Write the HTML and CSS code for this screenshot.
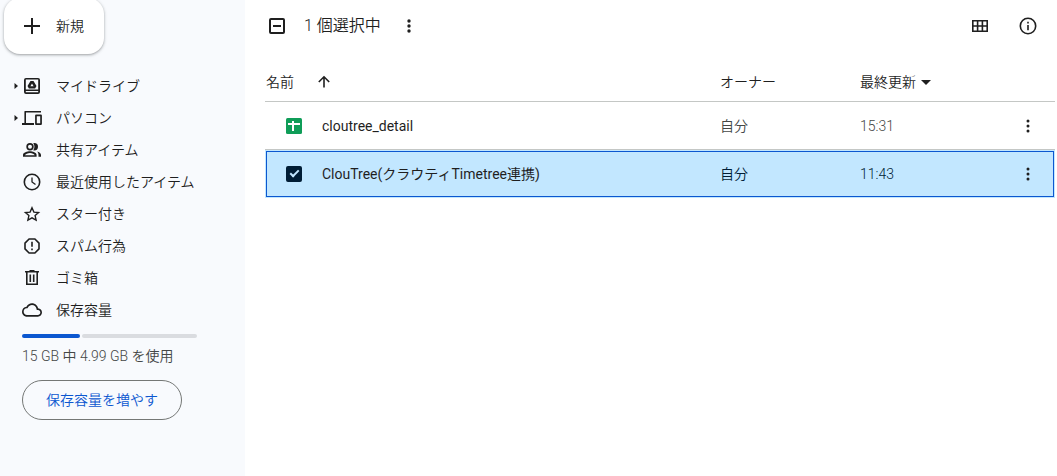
FILE: index.html
```html
<!DOCTYPE html>
<html lang="ja">

<head>
  <meta charset="UTF-8">
  <meta name="viewport" content="width=device-width, initial-scale=1.0">
  <title>マイドライブ</title>
  <link rel="stylesheet" href="styles.css">
</head>

<body>
  <div class="app">
    <aside class="sidebar">
      <button class="new-button" type="button">
        <svg class="icon-lg" viewBox="0 0 24 24"><path d="M11 4h2v7h7v2h-7v7h-2v-7H4v-2h7z"/></svg>
        <span>新規</span>
      </button>
      <nav>
        <ul class="menu">
          <li>
            <a href="#" class="menu-item">
              <svg class="caret" viewBox="0 0 12 12"><path d="M4.500 3L8 6L4.500 9z"/></svg>
              <svg class="icon" viewBox="0 0 20 20"><path fill-rule="evenodd" d="M4 2h12a2 2 0 0 1 2 2v12a2 2 0 0 1-2 2H4a2 2 0 0 1-2-2V4a2 2 0 0 1 2-2zM3.800 3.600v9.900h12.400V3.600zM3.800 15v1.300h12.400V15z"/><path fill-rule="evenodd" d="M8.500 5h3l3 5-1.400 2.500H6.900L5.500 10zM10 7.500l-1.600 2.800h3.200z"/></svg>
              <span>マイドライブ</span>
            </a>
          </li>
          <li>
            <a href="#" class="menu-item">
              <svg class="caret" viewBox="0 0 12 12"><path d="M4.500 3L8 6L4.500 9z"/></svg>
              <svg class="icon" viewBox="0 0 20 20"><path d="M3 3h16v1.600H4v10.400h8V17H0v-2h2.400V3.600c0-.4.200-.6.600-.6z"/><path fill-rule="evenodd" d="M14 6.500h5c.5 0 .9.400.9.900v8.700c0 .5-.4.900-.9.900h-5c-.5 0-.9-.4-.9-.9V7.400c0-.5.4-.9.900-.9zM14.800 8.200v7.100h3.400V8.200z"/></svg>
              <span>パソコン</span>
            </a>
          </li>
          <li>
            <a href="#" class="menu-item">
              <span class="caret"></span>
              <svg class="icon" viewBox="0 0 20 20"><path fill-rule="evenodd" d="M8 3a3.700 3.700 0 1 1 0 7.400A3.700 3.700 0 0 1 8 3zm0 1.700a2 2 0 1 0 0 4 2 2 0 0 0 0-4zM8 11.300c2.600 0 6.600 1.100 6.600 3.700v1.800H1V15c0-2.600 4.300-3.700 7-3.700zM2.900 15.200h9.900c-.3-.9-2.800-2.200-4.800-2.200s-4.800 1.300-5.100 2.200z"/><path d="M12.300 10.400a3.700 3.700 0 0 0 0-7.400c-.4 0-.7.100-1 .2 1.500 2 1.500 5 0 7 .3.100.6.200 1 .2zM15.100 11.600c.9.900 1.400 2 1.400 3.400v1.800H19V15c0-1.900-1.900-2.900-3.900-3.400z"/></svg>
              <span>共有アイテム</span>
            </a>
          </li>
          <li>
            <a href="#" class="menu-item">
              <span class="caret"></span>
              <svg class="icon stroked" viewBox="0 0 20 20"><circle cx="10" cy="10" r="7.700"/><path d="M10 5.500V10l3.500 2.600" stroke-width="1.300"/></svg>
              <span>最近使用したアイテム</span>
            </a>
          </li>
          <li>
            <a href="#" class="menu-item">
              <span class="caret"></span>
              <svg class="icon stroked star" viewBox="0 0 20 20"><path d="M10 3.800l1.900 4.300 4.700.4-3.500 3.100 1 4.600L10 13.800l-4.100 2.400 1-4.600-3.500-3.100 4.700-.4z"/></svg>
              <span>スター付き</span>
            </a>
          </li>
          <li>
            <a href="#" class="menu-item">
              <span class="caret"></span>
              <svg class="icon stroked" viewBox="0 0 20 20"><path d="M7.100 3h5.800L17 7.100v5.800L12.900 17H7.100L3 12.900V7.100z"/><path d="M10 5.800v5M10 12.400v1.800"/></svg>
              <span>スパム行為</span>
            </a>
          </li>
          <li>
            <a href="#" class="menu-item">
              <span class="caret"></span>
              <svg class="icon stroked" viewBox="0 0 20 20"><path d="M3 3.800h14M7.500 2.800h5M4.800 4v12.200h10.400V4M8.300 6.500v7.500M11.700 6.500v7.500"/></svg>
              <span>ゴミ箱</span>
            </a>
          </li>
          <li>
            <a href="#" class="menu-item">
              <span class="caret"></span>
              <svg class="icon" viewBox="2 2 20 20"><path d="M12 6c2.620 0 4.880 1.860 5.390 4.430l.300 1.500 1.530.110c1.560.100 2.780 1.410 2.780 2.960 0 1.650-1.350 3-3 3H6c-2.210 0-4-1.790-4-4 0-2.050 1.530-3.760 3.560-3.970l1.070-.110.500-.950C8.080 7.140 9.940 6 12 6m0-2C9.110 4 6.600 5.640 5.350 8.040 2.340 8.360 0 10.910 0 14c0 3.310 2.690 6 6 6h13c2.760 0 5-2.240 5-5 0-2.640-2.050-4.780-4.650-4.960C18.670 6.590 15.640 4 12 4z" transform="translate(2 2) scale(.833)"/></svg>
              <span>保存容量</span>
            </a>
          </li>
        </ul>
      </nav>
      <div class="storage">
        <div class="storage-bar" role="progressbar" aria-label="保存容量" aria-valuenow="33" aria-valuemin="0" aria-valuemax="100">
          <div class="storage-used" style="width: 33%"></div>
          <div class="storage-free"></div>
        </div>
        <p class="storage-text">15 GB 中 4.99 GB を使用</p>
        <button class="storage-button" type="button">保存容量を増やす</button>
      </div>
    </aside>

    <main class="main">
      <div class="toolbar">
        <input id="all" class="check partial" type="checkbox" aria-label="すべて選択">
        <label for="all" class="selected-count">1 個選択中</label>
        <button class="icon-button" type="button" aria-label="その他の操作">
          <svg class="icon" viewBox="0 0 20 20"><circle cx="10" cy="5" r="1.700"/><circle cx="10" cy="10" r="1.700"/><circle cx="10" cy="15" r="1.700"/></svg>
        </button>
        <div class="toolbar-right">
          <button class="icon-button" type="button" aria-label="グリッド レイアウト">
            <svg class="icon stroked" viewBox="0 0 20 20"><path d="M2.800 4.800h14.400v10.400H2.800zM7.600 4.800v10.400M12.400 4.800v10.400M2.800 10h14.400"/></svg>
          </button>
          <button class="icon-button" type="button" aria-label="詳細を表示">
            <svg class="icon stroked" viewBox="0 0 20 20"><circle cx="10" cy="10" r="7.700"/><path d="M10 9v5.300M10 5.700v1.800"/></svg>
          </button>
        </div>
      </div>

      <table class="files">
        <colgroup>
          <col>
          <col class="col-owner">
          <col class="col-date">
          <col class="col-action">
        </colgroup>
        <thead>
          <tr>
            <th>
              <button class="sort" type="button">
                <span>名前</span>
                <svg class="arrow-up stroked" viewBox="0 0 16 16"><path d="M8 13.500V3M2.800 8L8 2.800L13.200 8"/></svg>
              </button>
            </th>
            <th>オーナー</th>
            <th>
              <button class="sort narrow" type="button">
                <span>最終更新</span>
                <svg class="arrow-down" viewBox="0 0 10 10"><path d="M0 3h10L5 8z"/></svg>
              </button>
            </th>
            <th></th>
          </tr>
        </thead>
        <tbody>
          <tr>
            <td>
              <div class="file-name">
                <svg class="file-icon" viewBox="0 0 16 16"><rect width="16" height="16" rx="1.500" fill="#0f9d58"/><path d="M2 5h4V3h2v2h6v2H8v6H6V7H2z" fill="#fff"/></svg>
                <span>cloutree_detail</span>
              </div>
            </td>
            <td>自分</td>
            <td>15:31</td>
            <td class="action">
              <button class="icon-button" type="button" aria-label="その他の操作">
                <svg class="icon" viewBox="0 0 20 20"><circle cx="10" cy="5" r="1.500"/><circle cx="10" cy="10" r="1.500"/><circle cx="10" cy="15" r="1.500"/></svg>
              </button>
            </td>
          </tr>
          <tr class="selected">
            <td>
              <div class="file-name">
                <input id="file2" class="check" type="checkbox" checked>
                <label for="file2">ClouTree(クラウティTimetree連携)</label>
              </div>
            </td>
            <td>自分</td>
            <td>11:43</td>
            <td class="action">
              <button class="icon-button" type="button" aria-label="その他の操作">
                <svg class="icon" viewBox="0 0 20 20"><circle cx="10" cy="5" r="1.500"/><circle cx="10" cy="10" r="1.500"/><circle cx="10" cy="15" r="1.500"/></svg>
              </button>
            </td>
          </tr>
        </tbody>
      </table>
    </main>
  </div>
</body>

</html>
```
FILE: styles.css
```css
* {
  box-sizing: border-box;
}

body {
  margin: 0;
  font-family: Roboto, "Noto Sans CJK JP", sans-serif;
  font-size: 14px;
  font-weight: 350;
  line-height: 20px;
  color: #1f1f1f;
  background: #fff;
}

button {
  padding: 0;
  border: none;
  background: none;
  font: inherit;
  color: inherit;
  cursor: pointer;
}

svg {
  display: block;
  flex: none;
  fill: currentColor;
}

.stroked {
  fill: none;
  stroke: currentColor;
  stroke-width: 1.6px;
}

.star {
  stroke-width: 1.4px;
}

.icon {
  width: 20px;
  height: 20px;
}

.icon-lg {
  width: 24px;
  height: 24px;
}

.app {
  display: flex;
  min-height: 100vh;
  overflow: hidden;
}

/* sidebar */
.sidebar {
  flex: none;
  width: 245px;
  background: #f8fafd;
}

.new-button {
  display: flex;
  align-items: center;
  gap: 12px;
  height: 56px;
  margin: -2px 0 16px 4px;
  padding: 0 20px 0 16px;
  border-radius: 16px;
  background: #fff;
  box-shadow: 0 1px 2px rgba(60, 64, 67, 0.3), 0 1px 3px 1px rgba(60, 64, 67, 0.15);
}

.menu {
  margin: 0;
  padding: 0;
  list-style: none;
}

.menu-item {
  display: flex;
  align-items: center;
  height: 32px;
  padding-left: 10px;
  color: inherit;
  text-decoration: none;
}

.menu-item .icon {
  margin-right: 14px;
}

.caret {
  width: 12px;
  height: 12px;
}

.storage {
  padding: 8px 48px 0 22px;
}

.storage-bar {
  display: flex;
  gap: 2px;
  height: 4px;
}

.storage-used {
  border-radius: 2px;
  background: #0b57d0;
}

.storage-free {
  flex: 1;
  border-radius: 2px;
  background: #dadce0;
}

.storage-text {
  margin: 8px 0 14px;
  color: #444746;
}

.storage-button {
  height: 40px;
  padding: 0 23px;
  border: 1px solid #747775;
  border-radius: 20px;
  color: #0b57d0;
}

/* file list */
.main {
  flex: 1;
  min-width: 0;
  padding: 0 2px 0 20px;
}

.toolbar {
  display: flex;
  align-items: center;
  height: 52px;
  margin-bottom: 10px;
  padding: 0 11px 0 4px;
}

.selected-count {
  margin: 0 12px 0 19px;
  font-size: 16px;
}

.icon-button {
  display: flex;
  align-items: center;
  justify-content: center;
  width: 32px;
  height: 32px;
}

.toolbar-right {
  display: flex;
  gap: 16px;
  margin-left: auto;
}

.check {
  display: flex;
  align-items: center;
  justify-content: center;
  flex: none;
  width: 16px;
  height: 16px;
  margin: 0;
  border: 2px solid #1f1f1f;
  border-radius: 2px;
  appearance: none;
}

.check.partial::before {
  content: "";
  width: 8px;
  height: 2px;
  background: #1f1f1f;
}

.check:checked {
  border-color: #001d35;
  background: #001d35;
}

.check:checked::before {
  content: "";
  box-sizing: border-box;
  width: 9px;
  height: 5px;
  margin-bottom: 2px;
  border: solid #c2e7ff;
  border-width: 0 0 2px 2px;
  transform: rotate(-45deg);
}

.files {
  width: 100%;
  table-layout: fixed;
  border-spacing: 0;
}

.col-owner,
.col-date {
  width: 140px;
}

.col-action {
  width: 55px;
}

.files th {
  height: 40px;
  padding: 0;
  border-bottom: 1px solid #c4c7c5;
  font-weight: inherit;
  text-align: left;
}

.files th:first-child {
  padding-left: 1px;
}

.files td {
  height: 48px;
  padding: 0;
  border-bottom: 1px solid #c4c7c5;
  color: #444746;
}

.files td:first-child {
  color: #1f1f1f;
}

.sort {
  display: flex;
  align-items: center;
  gap: 22px;
}

.sort.narrow {
  gap: 5px;
}

.arrow-up {
  width: 16px;
  height: 16px;
}

.arrow-down {
  width: 10px;
  height: 10px;
}

.file-name {
  display: flex;
  align-items: center;
  gap: 20px;
  padding-left: 21px;
  font-weight: 400;
}

.file-icon {
  width: 16px;
  height: 16px;
}

.action .icon-button {
  margin: 0 auto;
  color: #1f1f1f;
}

.files .selected {
  outline: 1px solid #0b57d0;
  outline-offset: -2px;
}

.files .selected td {
  border-color: #c2e7ff;
  background: #c2e7ff;
  color: #001d35;
}

.files .selected td:first-child {
  color: #1f1f1f;
}
```
